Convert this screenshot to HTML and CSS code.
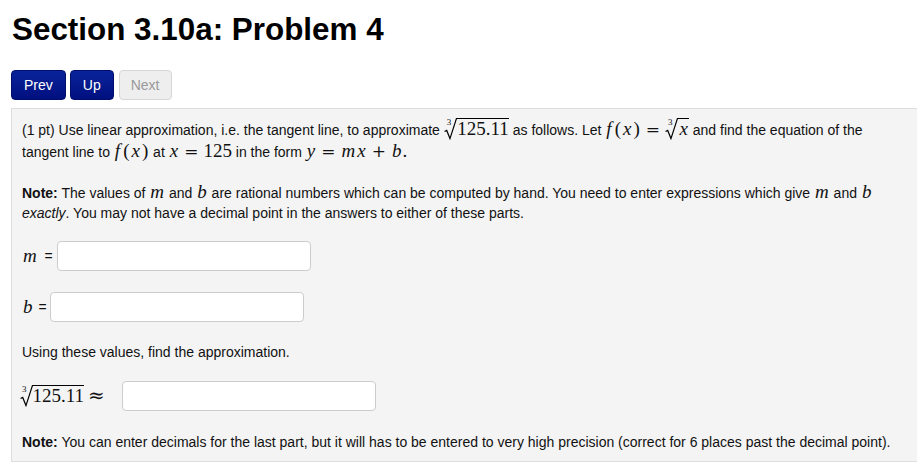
FILE: index.html
```html
<!DOCTYPE html>
<html>
<head>
<meta charset="utf-8">
<link rel="stylesheet" href="styles.css">
</head>
<body>
<div class="page">
  <h1 class="title">Section 3.10a: Problem 4</h1>
  <nav class="nav">
    <a class="btn btn-primary">Prev</a>
    <a class="btn btn-primary">Up</a>
    <a class="btn btn-disabled">Next</a>
  </nav>
  <div class="panel">
    <p class="intro">(1 pt) Use linear approximation, i.e. the tangent line, to approximate <span class="math"><span class="root"><span class="idx">3</span><svg class="rad" viewBox="0 0 12 20" preserveAspectRatio="none"><path d="M0.5 12.5 L2.5 11.5 L5.5 19 L11.5 0.5 L12 0.5" vector-effect="non-scaling-stroke"/></svg><span class="rc">125.11</span></span></span> as follows. Let <span class="math"><i class="fn">f</i><span class="par">(</span><i>x</i><span class="par">)</span><span class="op">=</span><span class="root"><span class="idx">3</span><svg class="rad" viewBox="0 0 12 20" preserveAspectRatio="none"><path d="M0.5 12.5 L2.5 11.5 L5.5 19 L11.5 0.5 L12 0.5" vector-effect="non-scaling-stroke"/></svg><span class="rc"><i>x</i></span></span></span> and find the equation of the tangent line to <span class="math"><i class="fn">f</i><span class="par">(</span><i>x</i><span class="par">)</span></span> at <span class="math"><i>x</i><span class="op">=</span>125</span> in the form <span class="math"><i>y</i><span class="op">=</span><i>m</i><i>x</i><span class="op">+</span><i>b</i>.</span></p>
    <p class="note"><b>Note:</b> The values of <span class="math"><i>m</i></span> and <span class="math"><i>b</i></span> are rational numbers which can be computed by hand. You need to enter expressions which give <span class="math"><i>m</i></span> and <span class="math"><i>b</i></span> <em>exactly</em>. You may not have a decimal point in the answers to either of these parts.</p>
    <div class="answer answer-m"><span class="math"><i class="lbl lbl-m">m</i></span>&nbsp;=&nbsp;<input class="field" type="text"></div>
    <div class="answer answer-b"><span class="math"><i class="lbl">b</i></span>&nbsp;=&nbsp;<input class="field" type="text"></div>
    <p class="using">Using these values, find the approximation.</p>
    <div class="answer answer-approx"><span class="math"><span class="root first"><span class="idx">3</span><svg class="rad" viewBox="0 0 12 20" preserveAspectRatio="none"><path d="M0.5 12.5 L2.5 11.5 L5.5 19 L11.5 0.5 L12 0.5" vector-effect="non-scaling-stroke"/></svg><span class="rc">125.11</span></span><span class="op op-approx">≈</span></span><input class="field field-approx" type="text"></div>
    <p class="last"><b>Note:</b> You can enter decimals for the last part, but it will has to be entered to very high precision (correct for 6 places past the decimal point).</p>
  </div>
</div>
</body>
</html>
```

FILE: styles.css
```css
html, body {
  margin: 0;
  padding: 0;
  background: #fff;
  overflow: hidden;
}
.page {
  padding: 0 0 0 11px;
  font-family: "Liberation Sans", Arial, sans-serif;
  color: #111;
}
.title {
  margin: 0;
  padding-top: 12px;
  font-size: 31.4px;
  line-height: 36px;
  font-weight: bold;
  color: #000;
  padding-left: 1px;
}
.nav {
  display: flex;
  gap: 4px;
  margin-top: 22px;
  height: 30px;
}
.btn {
  display: flex;
  align-items: center;
  justify-content: center;
  height: 30px;
  box-sizing: border-box;
  border-radius: 4px;
  font-size: 14px;
  padding: 0 12px;
}
.btn-primary {
  background: linear-gradient(#0a239a, #00107f);
  border: 1px solid #00106a;
  color: #fff;
}
.btn-primary + .btn-disabled {
  margin-left: 1px;
}
.btn-disabled {
  background: #eee;
  border: 1px solid #d6d6d6;
  color: #999;
  padding: 0 11px;
}
.panel {
  margin-top: 8px;
  background: #f4f4f4;
  border: 1px solid #ddd;
  border-right: none;
  padding: 9px 10px 9px 10px;
  font-size: 14px;
  line-height: 20px;
}
.panel p {
  margin: 0;
}
.intro {
  line-height: 22px;
}
.note {
  margin-top: 20px !important;
}
.math {
  font-family: "Liberation Serif", "Times New Roman", serif;
  font-size: 19px;
  line-height: 18px;
  white-space: nowrap;
}
.math i {
  font-style: italic;
  padding: 0 1px;
}
.math i.fn {
  padding: 0 2px 0 1px;
}
.math i.lbl {
  padding: 0 2px 0 1px;
}
.math i.lbl-m {
  padding: 0 4px 0 1px;
}
.par {
  padding: 0 1px;
}
.op {
  font-family: "DejaVu Serif", serif;
  font-size: 17px;
  margin: 0 5px;
}
.op-approx {
  font-size: 20px;
  margin: 0 5px 0 4px;
}
.root {
  display: inline-flex;
  align-items: stretch;
  margin-left: 3px;
}
.root.first {
  margin-left: 0;
}
.idx {
  font-size: 9px;
  line-height: 1;
  align-self: flex-start;
  margin-right: -7px;
  margin-top: 0;
  font-style: normal;
}
.rad {
  width: 13px;
  fill: none;
  stroke: #000;
  stroke-width: 1.2px;
}
.rc {
  align-self: baseline;
  border-top: 1px solid #000;
  line-height: 18px;
  padding-top: 1px;
}
.answer {
  display: flex;
  align-items: center;
}
.answer-m {
  margin-top: 18px;
}
.answer-b {
  margin-top: 21px;
}
.answer-approx {
  margin-top: 19px;
}
.field {
  width: 254px;
  height: 30px;
  box-sizing: border-box;
  border: 1px solid #ccc;
  border-radius: 4px;
  background: #fff;
  margin: 0;
  padding: 4px 6px;
}
.field-approx {
  margin-left: 12px;
}
.using {
  margin-top: 20px !important;
}
.last {
  margin-top: 21px !important;
}
```
